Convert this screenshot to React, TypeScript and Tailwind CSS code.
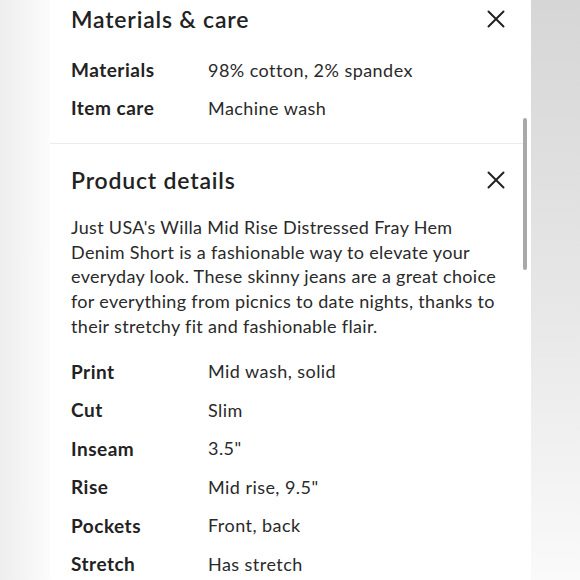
const care = [
  { label: "Materials", value: "98% cotton, 2% spandex" },
  { label: "Item care", value: "Machine wash" },
]

const details = [
  { label: "Print", value: "Mid wash, solid" },
  { label: "Cut", value: "Slim" },
  { label: "Inseam", value: '3.5"' },
  { label: "Rise", value: 'Mid rise, 9.5"' },
  { label: "Pockets", value: "Front, back" },
  { label: "Stretch", value: "Has stretch" },
]

const description = [
  "Just USA's Willa Mid Rise Distressed Fray Hem",
  "Denim Short is a fashionable way to elevate your",
  "everyday look. These skinny jeans are a great choice",
  "for everything from picnics to date nights, thanks to",
  "their stretchy fit and fashionable flair.",
]

const Row = ({ label, value, h }: { label: string; value: string; h: string }) => (
  <div className={`flex items-center ${h}`}>
    <div className="w-[137px] text-[19px] font-bold tracking-[0.5px] text-[#222]">{label}</div>
    <div className="text-[18px] tracking-[0.45px] text-[#2a2a2a]">{value}</div>
  </div>
)

const CloseIcon = () => (
  <svg width="18" height="18" viewBox="0 0 18 18" fill="none" stroke="#222" strokeWidth="2" strokeLinecap="round">
    <path d="M1.5 1.5l15 15M16.5 1.5l-15 15" />
  </svg>
)

const Heading = ({ title }: { title: string }) => (
  <div className="flex h-[28px] items-center justify-between pr-[26px]">
    <h2 className="text-[23px] font-semibold tracking-[0.8px] text-[#222]">{title}</h2>
    <CloseIcon />
  </div>
)

export default function App() {
  return (
    <div
      className="flex h-[580px] w-[580px] overflow-hidden bg-white"
      style={{ fontFamily: "Lato, 'Open Sans', sans-serif" }}
    >
      <div className="w-[50px] bg-gradient-to-r from-[#eeeeee] to-[#fcfcfc]" />

      <div className="relative w-[481px] bg-white">
        <div className="pl-[21px] pt-[5px]">
          <Heading title="Materials & care" />
          <div className="mt-[18px]">
            {care.map((r) => (
              <Row key={r.label} {...r} h="h-[38px]" />
            ))}
          </div>
        </div>

        <div className="mr-[5px] mt-[16px] h-px bg-[#ececec]" />

        <div className="pl-[21px] pt-[22px]">
          <Heading title="Product details" />
          <p className="mt-[21px] text-[18px] leading-[24.7px] tracking-[0.32px] whitespace-nowrap text-[#2a2a2a]">
            {description.map((line) => (
              <span key={line} className="block">
                {line}
              </span>
            ))}
          </p>
          <div className="mt-[14px]">
            {details.map((r) => (
              <Row key={r.label} {...r} h="h-[38.5px]" />
            ))}
          </div>
        </div>

        <div className="absolute right-[4px] top-[118px] h-[152px] w-[4px] rounded-full bg-[#a9a9a9]" />
      </div>

      <div className="flex-1 bg-gradient-to-b from-[#d6d6d6] via-[#e6e6e6] to-[#fafafa]" />
    </div>
  )
}
